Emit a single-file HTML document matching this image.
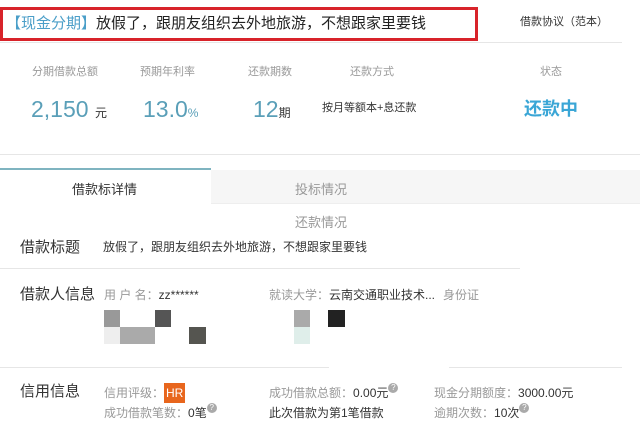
<!DOCTYPE html>
<html><head><meta charset="utf-8"><style>
body{margin:0;width:640px;height:441px;background:#fff;font-family:"Liberation Sans","Noto Sans CJK SC",sans-serif;position:relative;overflow:hidden;color:#333}
.a{position:absolute;white-space:nowrap;line-height:1}
.g{color:#999}
.l{position:absolute;height:1px;background:#e6e6e6}
.s{font-size:12px}
.q{display:inline-block;width:10px;height:10px;border-radius:50%;background:#aaa;color:#fff;font-size:8px;line-height:10px;text-align:center;vertical-align:top;margin-top:-4px}
.px{position:absolute}
.h{font-size:15px;color:#333}
</style></head><body>
<div class="a" style="left:0;top:7px;width:472px;height:28px;border:3px solid #d8232a"></div>
<div class="a" style="left:6px;top:16px;font-size:15px;color:#222"><span style="color:#4a9ec8">【现金分期】</span>放假了，跟朋友组织去外地旅游，不想跟家里要钱</div>
<div class="a" style="left:520px;top:17px;font-size:11px;color:#333">借款协议（范本）</div>
<div class="l" style="left:0;top:42px;width:622px"></div>

<div class="a g" style="left:32px;top:67px;font-size:11px">分期借款总额</div>
<div class="a g" style="left:140px;top:67px;font-size:11px">预期年利率</div>
<div class="a g" style="left:248px;top:67px;font-size:11px">还款期数</div>
<div class="a g" style="left:350px;top:67px;font-size:11px">还款方式</div>
<div class="a g" style="left:540px;top:67px;font-size:11px">状态</div>
<div class="a" style="left:31px;top:98px;font-size:23px;color:#5a9fb8">2,150 <span style="font-size:12px;color:#333">元</span></div>
<div class="a" style="left:143px;top:98px;font-size:23px;color:#5a9fb8">13.0<span style="font-size:12px">%</span></div>
<div class="a" style="left:253px;top:98px;font-size:23px;color:#5a9fb8">12<span style="font-size:12px;color:#333">期</span></div>
<div class="a" style="left:322px;top:103px;font-size:11px">按月等额本+息还款</div>
<div class="a" style="left:524px;top:100px;font-size:18px;font-weight:bold;color:#3aa6d6">还款中</div>
<div class="l" style="left:0;top:154px;width:640px"></div>

<div class="a" style="left:211px;top:170px;width:429px;height:33px;background:#f6f6f6"></div>
<div class="a" style="left:0;top:168px;width:211px;height:2px;background:#7fb4c0"></div>
<div class="l" style="left:211px;top:203px;width:429px;background:#eee"></div>
<div class="a" style="left:72px;top:183px;font-size:13px;color:#333">借款标详情</div>
<div class="a" style="left:295px;top:183px;font-size:13px;color:#999">投标情况</div>
<div class="a" style="left:295px;top:216px;font-size:13px;color:#999">还款情况</div>

<div class="a h" style="left:20px;top:240px">借款标题</div>
<div class="a s" style="left:103px;top:241px">放假了，跟朋友组织去外地旅游，不想跟家里要钱</div>
<div class="l" style="left:0;top:268px;width:520px"></div>

<div class="a h" style="left:20px;top:287px">借款人信息</div>
<div class="a s" style="left:104px;top:289px"><span class="g">用 户 名：</span>zz******</div>
<div class="a s" style="left:269px;top:289px"><span class="g">就读大学：</span>云南交通职业技术...</div>
<div class="a s g" style="left:443px;top:289px">身份证</div>
<div class="px" style="left:104px;top:310px;width:16px;height:17px;background:#999"></div>
<div class="px" style="left:155px;top:310px;width:16px;height:17px;background:#555"></div>
<div class="px" style="left:104px;top:327px;width:16px;height:17px;background:#eee"></div>
<div class="px" style="left:120px;top:327px;width:35px;height:17px;background:#aaa"></div>
<div class="px" style="left:189px;top:327px;width:17px;height:17px;background:#555550"></div>
<div class="px" style="left:294px;top:310px;width:16px;height:17px;background:#aaa"></div>
<div class="px" style="left:328px;top:310px;width:17px;height:17px;background:#222"></div>
<div class="px" style="left:294px;top:327px;width:16px;height:17px;background:#dfeeea"></div>
<div class="l" style="left:0;top:367px;width:329px"></div>
<div class="l" style="left:449px;top:367px;width:173px"></div>

<div class="a h" style="left:20px;top:384px">信用信息</div>
<div class="a s" style="left:104px;top:387px"><span class="g">信用评级：</span><span style="background:#e8661d;color:#fff;padding:3px 2px">HR</span></div>
<div class="a s" style="left:104px;top:407px"><span class="g">成功借款笔数：</span>0笔<span class="q">?</span></div>
<div class="a s" style="left:269px;top:387px"><span class="g">成功借款总额：</span>0.00元<span class="q">?</span></div>
<div class="a s" style="left:269px;top:407px">此次借款为第1笔借款</div>
<div class="a s" style="left:434px;top:387px"><span class="g">现金分期额度：</span>3000.00元</div>
<div class="a s" style="left:434px;top:407px"><span class="g">逾期次数：</span>10次<span class="q">?</span></div>
</body></html>
